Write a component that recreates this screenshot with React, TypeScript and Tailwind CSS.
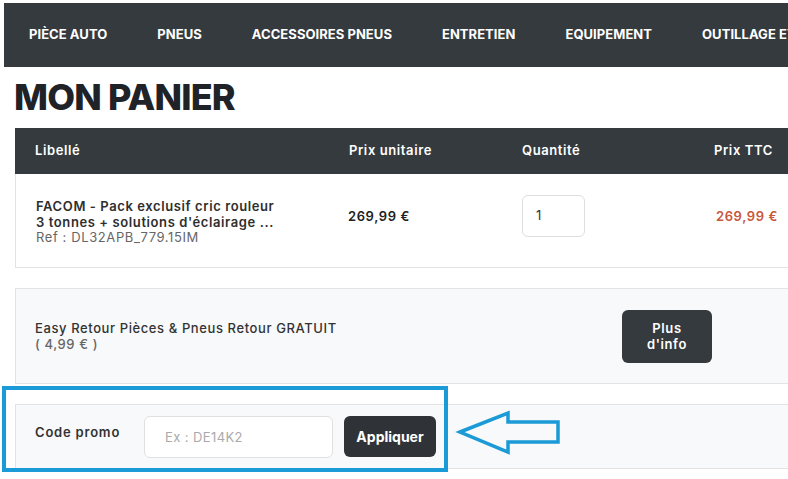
import React from 'react';

const navItems = ['PIÈCE AUTO', 'PNEUS', 'ACCESSOIRES PNEUS', 'ENTRETIEN', 'EQUIPEMENT', 'OUTILLAGE ET ACCESSOIRES'];

const font = { fontFamily: 'Inter, "Noto Sans", sans-serif' };

export default function App() {
  return (
    <div className="relative w-[788px] h-[479px] overflow-hidden bg-white text-[#333]" style={font}>
      {/* Top menu */}
      <nav className="ml-[4px] mt-[3px] h-[64px] w-[900px] bg-[#353a3f] flex items-center pl-[25px] gap-[50px] whitespace-nowrap">
        {navItems.map((item) => (
          <span key={item} className="text-white text-[13px] font-bold tracking-[0.05px]">
            {item}
          </span>
        ))}
      </nav>

      <div className="pl-[15px]">
        <h1 className="mt-[10px] h-[51px] -ml-[1px] text-[36px] leading-[40px] font-extrabold tracking-[-0.8px] text-[#1f2327]">
          MON PANIER
        </h1>

        {/* Cart table */}
        <div className="w-[800px]">
          <div className="h-[46px] bg-[#353a3f] grid grid-cols-[334px_173px_192px_1fr] items-center text-white text-[13px] font-semibold tracking-[0.6px]">
            <div className="pl-[20px]">Libellé</div>
            <div>Prix unitaire</div>
            <div>Quantité</div>
            <div>Prix TTC</div>
          </div>
          <div className="h-[94px] border-l border-b border-[#e3e3e3] grid grid-cols-[332px_174px_195px_1fr] items-start pt-[21px] tracking-[0.6px]">
            <div className="pl-[20px] pt-[4px] text-[13px] leading-[15.5px]">
              <div className="font-semibold text-[#2e2e2e]">FACOM - Pack exclusif cric rouleur</div>
              <div className="font-semibold text-[#2e2e2e]">3 tonnes + solutions d'éclairage ...</div>
              <div className="text-[#666]">Ref : DL32APB_779.15IM</div>
            </div>
            <div className="pt-[12px] text-[13px] font-semibold text-[#222]">269,99 €</div>
            <div>
              <div className="w-[63px] h-[42px] border border-[#dedede] rounded-md flex items-center pl-[13px] text-[13px] text-[#333]">
                1
              </div>
            </div>
            <div className="pt-[12px] -ml-[1px] text-[13px] font-semibold text-[#c9573b]">269,99 €</div>
          </div>
        </div>

        {/* Easy retour */}
        <div className="mt-[20px] w-[800px] h-[96px] bg-[#f8f9fa] border border-[#e3e3e3] flex items-center tracking-[0.6px]">
          <div className="w-[606px] pl-[19px] text-[13px] leading-[16px]">
            <div className="font-medium text-[#333]">Easy Retour Pièces &amp; Pneus Retour GRATUIT</div>
            <div className="text-[#666] font-medium">( 4,99 € )</div>
          </div>
          <button className="w-[90px] h-[53px] rounded-md bg-[#353a3f] text-white text-[13px] font-semibold leading-[16px]">
            Plus
            <br />
            d'info
          </button>
        </div>

        {/* Promo code */}
        <div className="mt-[20px] w-[800px] h-[65px] bg-[#f8f9fa] border border-[#e3e3e3] flex items-center pl-[19px]">
          <span className="w-[109px] text-[13px] font-semibold text-[#333] tracking-[0.8px] -mt-[8px]">Code promo</span>
          <input
            className="w-[189px] h-[42px] bg-white border border-[#e0e0e0] rounded-md pl-[20px] text-[13px] tracking-[0.4px] placeholder:text-[#aaa] outline-none"
            placeholder="Ex : DE14K2"
          />
          <button className="ml-[11px] w-[92px] h-[41px] rounded-md bg-[#2f3338] text-white text-[14px] font-bold">
            Appliquer
          </button>
        </div>
      </div>

      {/* Highlight overlay */}
      <div className="absolute left-[2px] top-[386px] w-[446px] h-[86px] border-[4px] border-[#1a9ad6] pointer-events-none" />
      <svg className="absolute left-[455px] top-[408px]" width="108" height="48" viewBox="0 0 108 48">
        <path
          d="M5 24 L53 5 L53 14 L103 14 L103 34 L53 34 L53 44 Z"
          fill="none"
          stroke="#1a9ad6"
          strokeWidth="3.5"
          strokeLinejoin="miter"
        />
      </svg>
    </div>
  );
}
